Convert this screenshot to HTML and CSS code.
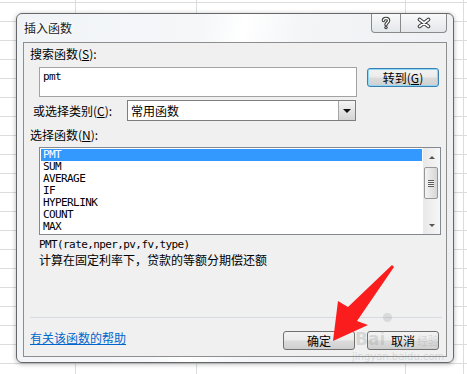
FILE: index.html
```html
<!DOCTYPE html>
<html>
<head>
    <meta charset="utf-8">
    <title>插入函数</title>
    <link rel="stylesheet" href="styles.css">
</head>
<body>
    <div class="dialog">
        <div class="titlebar">
            <span class="title">插入函数</span>
            <div class="caption-btns">
                <span class="cap cap-help">
                    <svg width="12" height="14" viewBox="-6 -7 12 14">
                        <path d="M-2.6,-2.4 C-2.6,-5.2 2.6,-5.2 2.6,-2.4 C2.6,-0.2 0,-0.4 0,1.8" fill="none" stroke="#3a3a3a" stroke-width="3.4" stroke-linecap="round"/>
                        <circle cx="0" cy="4.6" r="1.7" fill="#3a3a3a"/>
                        <path d="M-2.6,-2.4 C-2.6,-5.2 2.6,-5.2 2.6,-2.4 C2.6,-0.2 0,-0.4 0,1.8" fill="none" stroke="#fff" stroke-width="1.3" stroke-linecap="round"/>
                        <circle cx="0" cy="4.6" r="0.6" fill="#fff"/>
                    </svg>
                </span>
                <span class="cap cap-close">
                    <svg width="14" height="12" viewBox="-7 -6 14 12">
                        <path d="M-4.5,-3.5 L4.5,3.5 M-4.5,3.5 L4.5,-3.5" stroke="#3a3a3a" stroke-width="3.6" stroke-linecap="round"/>
                        <path d="M-4.5,-3.5 L4.5,3.5 M-4.5,3.5 L4.5,-3.5" stroke="#fff" stroke-width="1.6" stroke-linecap="round"/>
                    </svg>
                </span>
            </div>
        </div>

        <div class="client">
            <div class="label">搜索函数(<u>S</u>):</div>
            <div class="search-row">
                <div class="search-box">pmt</div>
                <button class="btn btn-default">转到(<u>G</u>)</button>
            </div>

            <div class="cat-row">
                <span class="cat-label">或选择类别(<u>C</u>):</span>
                <div class="combo">
                    <span class="combo-text">常用函数</span>
                    <span class="combo-btn"><span class="tri-down"></span></span>
                </div>
            </div>

            <div class="label fn-label">选择函数(<u>N</u>):</div>
            <div class="listbox">
                <ul class="fn-list">
                    <li class="selected">PMT</li>
                    <li>SUM</li>
                    <li>AVERAGE</li>
                    <li>IF</li>
                    <li>HYPERLINK</li>
                    <li>COUNT</li>
                    <li>MAX</li>
                </ul>
                <div class="scrollbar">
                    <span class="sb-btn"><span class="tri-up"></span></span>
                    <span class="sb-thumb"><span class="grip"></span></span>
                    <span class="sb-space"></span>
                    <span class="sb-btn"><span class="tri-down small"></span></span>
                </div>
            </div>

            <div class="signature">PMT(rate,nper,pv,fv,type)</div>
            <div class="desc">计算在固定利率下，贷款的等额分期偿还额</div>

            <div class="sep"></div>

            <div class="bottom-row">
                <a class="help-link" href="#">有关该函数的帮助</a>
                <div class="actions">
                    <button class="btn">确定</button>
                    <button class="btn">取消</button>
                </div>
            </div>
        </div>
    </div>

    <!-- screenshot watermark -->
    <span class="wm wm-bai">Bai</span>
    <span class="wm wm-paw"></span>
    <span class="wm wm-jy">经验</span>
    <span class="wm wm-url">jingyan.baidu.com</span>

    <!-- red pointer drawn over the dialog -->
    <svg class="pointer" width="467" height="374" viewBox="0 0 467 374">
        <polygon points="392,265 394,267 357,321 368,325 333,341 338,301 348,307" fill="#fb1d1d"/>
    </svg>
</body>
</html>
```

FILE: styles.css
```css
body {
    margin: 0;
    width: 467px;
    height: 374px;
    overflow: hidden;
    position: relative;
    font-family: "Noto Sans CJK SC", "DejaVu Sans", sans-serif;
    font-size: 12px;
    color: #000;
    background-color: #fff;
    background-image:
        linear-gradient(#dadcdd, #dadcdd),
        linear-gradient(#dadcdd, #dadcdd),
        linear-gradient(#dadcdd, #dadcdd),
        linear-gradient(#dadcdd, #dadcdd),
        linear-gradient(to bottom, transparent 18px, #dadcdd 18px);
    background-size: 1px 100%, 1px 100%, 1px 100%, 1px 100%, 100% 19px;
    background-position: 75px 0, 196px 0, 405px 0, 463px 0, 0 3px;
    background-repeat: no-repeat, no-repeat, no-repeat, no-repeat, repeat;
}

/* window frame */
.dialog {
    margin: 13px 0 0 16px;
    width: 438px;
    box-sizing: border-box;
    border: 1px solid #676767;
    border-radius: 6px;
    padding: 0 6px 5px;
    background: linear-gradient(100deg, #f1f4f7 0%, #f5f7f9 38%, #ffffff 46%, #f3f5f7 58%, #eceff2 100%);
    box-shadow: 0 1px 5px rgba(0, 0, 0, 0.3);
}

.titlebar {
    display: flex;
    align-items: flex-start;
    height: 28px;
}

.title {
    flex: 1;
    padding: 7px 0 0 1px;
    line-height: 14px;
    color: #1a1a1a;
    text-shadow: 0 0 4px #fff, 0 0 8px #fff;
}

.caption-btns {
    display: flex;
    height: 18px;
    border: 1px solid #8a8a8a;
    border-top: none;
    border-radius: 0 0 4px 4px;
    background: linear-gradient(#f8f9fa, #e4e7ea);
}

.cap {
    display: flex;
    align-items: center;
    justify-content: center;
}

.cap-help {
    width: 28px;
    border-right: 1px solid #8a8a8a;
}

.cap-close {
    width: 45px;
}

/* client area */
.client {
    height: 315px;
    box-sizing: border-box;
    border: 1px solid #8e8e8e;
    background: #f0f0f0;
}

.label {
    margin-top: 4px;
    padding-left: 6px;
    line-height: 14px;
}

.fn-label {
    margin-top: 7px;
}

.search-row {
    display: flex;
    align-items: flex-start;
    margin: 6px 0 0 15px;
}

.search-box {
    width: 318px;
    height: 30px;
    box-sizing: border-box;
    border: 1px solid #a2a2a2;
    background: #fff;
    padding: 3px 0 0 3px;
    font-family: "DejaVu Sans Mono", monospace;
    font-size: 11px;
    letter-spacing: -0.6px;
    line-height: 12px;
}

.btn {
    width: 72px;
    height: 19px;
    box-sizing: border-box;
    padding: 0;
    border: 1px solid #707070;
    border-radius: 3px;
    background: linear-gradient(#f3f3f3 0%, #ebebeb 48%, #dcdcdc 52%, #cfcfcf 100%);
    font-family: "Noto Sans CJK SC", sans-serif;
    font-size: 12px;
    line-height: 16px;
    color: #000;
    text-align: center;
}

.btn-default {
    margin: 1px 0 0 10px;
    border-color: #3c7fb1;
    box-shadow: inset 0 0 0 1px #8ad8f5;
}

.cat-row {
    display: flex;
    align-items: center;
    margin-top: 3px;
    padding-left: 9px;
}

.cat-label {
    width: 94px;
    line-height: 14px;
}

.combo {
    display: flex;
    width: 229px;
    height: 21px;
    box-sizing: border-box;
    border: 1px solid #7e7e7e;
    background: #fff;
}

.combo-text {
    flex: 1;
    padding-left: 3px;
    line-height: 19px;
}

.combo-btn {
    display: flex;
    align-items: center;
    justify-content: center;
    width: 16px;
    border-left: 1px solid #a5a5a5;
    background: linear-gradient(#f4f4f4, #d4d4d4);
}

.tri-down {
    width: 0;
    height: 0;
    border-left: 4px solid transparent;
    border-right: 4px solid transparent;
    border-top: 4px solid #111;
}

.tri-down.small {
    border-left-width: 3px;
    border-right-width: 3px;
    border-top: 3px solid #555;
}

.tri-up {
    width: 0;
    height: 0;
    border-left: 3px solid transparent;
    border-right: 3px solid transparent;
    border-bottom: 3px solid #555;
}

/* function list */
.listbox {
    display: flex;
    margin: 5px 0 0 15px;
    width: 402px;
    height: 88px;
    box-sizing: border-box;
    border: 1px solid #848890;
    background: #fff;
}

.fn-list {
    width: 383px;
    box-sizing: border-box;
    margin: 0;
    padding: 1px 1px 0;
    list-style: none;
}

.fn-list li {
    height: 12px;
    padding-left: 2px;
    font-family: "DejaVu Sans Mono", monospace;
    font-size: 11px;
    letter-spacing: -0.6px;
    line-height: 12px;
}

.fn-list li.selected {
    background: #3399ff;
    color: #fff;
}

.scrollbar {
    display: flex;
    flex-direction: column;
    width: 17px;
    background: linear-gradient(to right, #e8e8e8, #f6f6f6);
}

.sb-btn {
    display: flex;
    align-items: center;
    justify-content: center;
    height: 18px;
}

.sb-thumb {
    display: flex;
    align-items: center;
    justify-content: center;
    height: 32px;
    margin: 1px 2px 0 1px;
    box-sizing: border-box;
    border: 1px solid #979797;
    border-radius: 2px;
    background: linear-gradient(to right, #f4f4f4, #e2e2e2 60%, #d6d6d6);
}

.grip {
    width: 6px;
    height: 7px;
    background: repeating-linear-gradient(to bottom, #5c5c5c 0 1px, #f2f2f2 1px 2px);
}

.sb-space {
    flex: 1;
}

.signature {
    margin: 4px 0 0 15px;
    font-family: "DejaVu Sans Mono", monospace;
    font-size: 11px;
    letter-spacing: -0.6px;
    line-height: 12px;
}

.desc {
    margin: 2px 0 0 15px;
    line-height: 14px;
}

.sep {
    margin: 50px 4px 0 6px;
    height: 1px;
    background: #d5dbe1;
}

.bottom-row {
    display: flex;
    justify-content: space-between;
    align-items: flex-start;
    margin-top: 13px;
    padding: 0 7px 0 6px;
}

.help-link {
    line-height: 14px;
    color: #0066cc;
    text-decoration: underline;
}

.actions {
    display: flex;
    gap: 12px;
}

/* overlays: faint watermark of the source screenshot */
.wm {
    position: absolute;
    color: rgba(150, 150, 150, 0.3);
    font-family: "DejaVu Sans", sans-serif;
    pointer-events: none;
}

.wm-bai {
    left: 355px;
    top: 329px;
    font-size: 17px;
    font-weight: bold;
    line-height: 20px;
}

.wm-paw {
    left: 383px;
    top: 313px;
    width: 9px;
    height: 9px;
    border-radius: 50%;
    background: rgba(150, 150, 150, 0.25);
}

.wm-jy {
    left: 417px;
    top: 334px;
    font-family: "Noto Sans CJK SC", sans-serif;
    font-size: 11px;
    line-height: 13px;
}

.wm-url {
    left: 352px;
    top: 351px;
    font-size: 10px;
    line-height: 11px;
}

.pointer {
    position: absolute;
    left: 0;
    top: 0;
    pointer-events: none;
}
```
